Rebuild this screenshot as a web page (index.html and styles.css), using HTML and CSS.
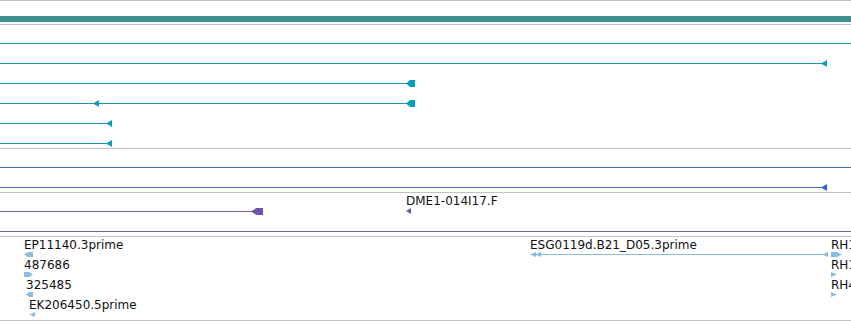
FILE: index.html
```html
<!DOCTYPE html>
<html lang="en">
<head>
  <meta charset="UTF-8">
  <meta name="viewport" content="width=device-width, initial-scale=1.0">
  <title>Tracks</title>
  <link rel="stylesheet" href="styles.css">
</head>
<body>
  <div class="browser">
    <div class="rule"></div>
    <div class="ruler"></div>
    <div class="rule rule-sep"></div>

    <!-- cDNA track -->
    <section class="track teal">
      <div class="row"><span class="line" style="left:0;width:851px"></span></div>
      <div class="row">
        <span class="line" style="left:0;width:826px"></span>
        <span class="head tip-l" style="left:821px"></span>
      </div>
      <div class="row">
        <span class="line" style="left:0;width:410px"></span>
        <span class="head block-l" style="left:406px"></span>
      </div>
      <div class="row">
        <span class="line" style="left:0;width:410px"></span>
        <span class="head tip-l" style="left:93px"></span>
        <span class="head block-l" style="left:406px"></span>
      </div>
      <div class="row">
        <span class="line" style="left:0;width:110px"></span>
        <span class="head tip-l" style="left:106px"></span>
      </div>
      <div class="row">
        <span class="line" style="left:0;width:110px"></span>
        <span class="head tip-l" style="left:106px"></span>
      </div>
    </section>
    <div class="rule"></div>

    <!-- second track -->
    <section class="track blue">
      <div class="row"><span class="line" style="left:0;width:851px"></span></div>
      <div class="row">
        <span class="line" style="left:0;width:824px"></span>
        <span class="head tip-l" style="left:821px"></span>
      </div>
    </section>
    <div class="rule"></div>

    <!-- third track -->
    <section class="track purple">
      <div class="row">
        <span class="line" style="left:0;width:258px"></span>
        <span class="head block-l wide" style="left:251px"></span>
        <span class="label" style="left:406px">DME1-014I17.F</span>
        <span class="head tip-l small" style="left:406px"></span>
      </div>
      <div class="row"><span class="line" style="left:0;width:851px"></span></div>
    </section>
    <div class="rule"></div>

    <!-- labelled ESTs -->
    <section class="track ests">
      <div class="row">
        <span class="label" style="left:24px">EP11140.3prime</span>
        <span class="mark block-l" style="left:24px"></span>
        <span class="label" style="left:530px">ESG0119d.B21_D05.3prime</span>
        <span class="mark tip-l" style="left:530px"></span>
        <span class="mark tip-l" style="left:535px"></span>
        <span class="link" style="left:538px;width:286px"></span>
        <span class="mark tip-l" style="left:822px"></span>
        <span class="label" style="left:831px">RH1</span>
        <span class="mark block-r" style="left:831px;width:11px"></span>
      </div>
      <div class="row">
        <span class="label" style="left:24px">487686</span>
        <span class="mark block-r" style="left:24px"></span>
        <span class="label" style="left:831px">RH1</span>
        <span class="mark tip-r" style="left:831px"></span>
      </div>
      <div class="row">
        <span class="label" style="left:26px">325485</span>
        <span class="mark block-l" style="left:26px;width:7px"></span>
        <span class="label" style="left:831px">RH4</span>
        <span class="mark tip-r" style="left:831px"></span>
      </div>
      <div class="row">
        <span class="label" style="left:29px">EK206450.5prime</span>
        <span class="mark tip-l" style="left:29px"></span>
      </div>
    </section>
    <div class="rule"></div>
  </div>
</body>
</html>
```

FILE: styles.css
```css
* {
  margin: 0;
  padding: 0;
  box-sizing: border-box;
}

body {
  font-family: "DejaVu Sans", sans-serif;
  font-size: 12px;
  background-color: #fff;
  color: #111;
  overflow: hidden;
}

.browser {
  width: 851px;
  overflow: hidden;
}

.rule {
  height: 1px;
  background: #c2c2c2;
}

.rule-sep {
  margin-top: 2px;
}

.ruler {
  margin-top: 15px;
  height: 6px;
  background: #408f91;
}

.track {
  padding-bottom: 3px;
}

.row {
  position: relative;
  height: 20px;
}

.line {
  position: absolute;
  top: 18px;
  height: 1px;
}

.head {
  position: absolute;
  top: 15px;
  width: 6px;
  height: 7px;
}

.head.block-l {
  width: 9px;
}

.head.wide {
  width: 12px;
}

.head.small {
  top: 15px;
  width: 5px;
  height: 6px;
}

.label {
  position: absolute;
  top: 1px;
  line-height: 14px;
  white-space: nowrap;
}

.mark {
  position: absolute;
  top: 15px;
  width: 6px;
  height: 5px;
  background: #8abde2;
}

.mark.block-l,
.mark.block-r {
  width: 9px;
}

.link {
  position: absolute;
  top: 17px;
  height: 1px;
  background: #8abde2;
}

/* arrow shapes */
.tip-l {
  clip-path: polygon(0 50%, 100% 0, 100% 100%);
}

.tip-r {
  clip-path: polygon(0 0, 100% 50%, 0 100%);
}

.block-l {
  clip-path: polygon(0 50%, 45% 0, 100% 0, 100% 100%, 45% 100%);
}

.block-r {
  clip-path: polygon(0 0, 55% 0, 100% 50%, 55% 100%, 0 100%);
}

/* track colours */
.teal .line { background: #2394b0; }
.teal .head { background: #0b9bbf; }

.blue .line { background: #3d6bb8; }
.blue .head { background: #2d66d0; }

.purple .line { background: #7a62a8; }
.purple .head { background: #7152a8; }
```
